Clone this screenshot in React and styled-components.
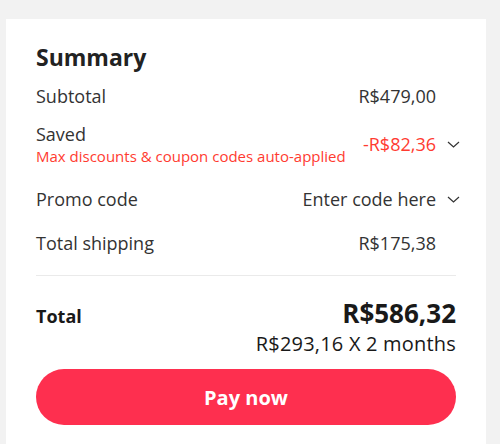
import React from 'react'
import styled, { createGlobalStyle } from 'styled-components'

const GlobalStyle = createGlobalStyle`
    body {
        margin: 0;
        background: #f2f2f2;
        font-family: "Open Sans", "Liberation Sans", sans-serif;
        color: #333;
    }
`

const Page = styled.div`
    padding: 19px 14px 0 6px;
`

const Card = styled.section`
    background: #fff;
    width: 480px;
    box-sizing: border-box;
    padding: 23px 30px 24px;
`

const Title = styled.h2`
    font-size: 23px;
    line-height: 30px;
    font-weight: 700;
    color: #222;
    margin: 0 0 12px;
`

const Row = styled.div`
    display: flex;
    align-items: center;
    justify-content: space-between;
    margin-top: ${props => props.$gap || 0}px;
    padding-right: ${props => (props.$chevron ? 0 : 20)}px;
    margin-right: ${props => (props.$chevron ? -4 : 0)}px;
`

const Label = styled.div`
    font-size: 18px;
    line-height: 24px;
    color: #333;
`

const Note = styled.div`
    font-size: 15px;
    line-height: 20px;
    color: #ff3b30;
`

const Value = styled.div`
    display: flex;
    align-items: center;
    gap: 11px;
    font-size: 18px;
    line-height: 24px;
    color: ${props => (props.$red ? '#ff3b30' : '#333')};
`

const Divider = styled.hr`
    border: 0;
    border-top: 1px solid #eaeaea;
    margin: 20px 0 0;
`

const TotalRow = styled.div`
    display: flex;
    justify-content: space-between;
    align-items: flex-start;
    padding-top: 22px;
`

const TotalLabel = styled.div`
    font-size: 18px;
    font-weight: 700;
    line-height: 30px;
    margin-top: 3px;
    color: #191919;
`

const TotalAmounts = styled.div`
    text-align: right;
`

const TotalValue = styled.div`
    font-size: 26px;
    font-weight: 700;
    line-height: 30px;
    color: #191919;
`

const Installment = styled.div`
    font-size: 20px;
    line-height: 26px;
    margin-top: 3px;
    letter-spacing: 0.2px;
    color: #191919;
`

const PayButton = styled.button`
    display: block;
    width: 100%;
    height: 56px;
    margin-top: 12px;
    border: 0;
    border-radius: 28px;
    background: #fe2f4f;
    color: #fff;
    font-family: inherit;
    font-size: 20px;
    font-weight: 700;
    cursor: pointer;
`

const Chevron = () => (
    <svg width="13" height="7" viewBox="0 0 13 7" fill="none">
        <path d="M1 1l5.5 5L12 1" stroke="#333" strokeWidth="1.2" />
    </svg>
)

const App = () => (
    <Page>
        <GlobalStyle />
        <Card>
            <Title>Summary</Title>
            <Row>
                <Label>Subtotal</Label>
                <Value>R$479,00</Value>
            </Row>
            <Row $gap={14} $chevron>
                <div>
                    <Label>Saved</Label>
                    <Note>Max discounts &amp; coupon codes auto-applied</Note>
                </div>
                <Value $red>
                    -R$82,36
                    <Chevron />
                </Value>
            </Row>
            <Row $gap={21} $chevron>
                <Label>Promo code</Label>
                <Value>
                    Enter code here
                    <Chevron />
                </Value>
            </Row>
            <Row $gap={20}>
                <Label>Total shipping</Label>
                <Value>R$175,38</Value>
            </Row>
            <Divider />
            <TotalRow>
                <TotalLabel>Total</TotalLabel>
                <TotalAmounts>
                    <TotalValue>R$586,32</TotalValue>
                    <Installment>R$293,16 X 2 months</Installment>
                </TotalAmounts>
            </TotalRow>
            <PayButton>Pay now</PayButton>
        </Card>
    </Page>
)

export default App
